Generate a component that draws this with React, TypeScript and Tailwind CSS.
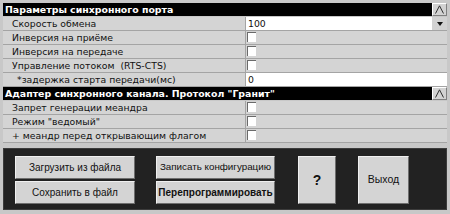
import React from 'react'

type Row = { label: string; kind: 'select' | 'check' | 'text'; value?: string; indent?: boolean }

const PORT_ROWS: Row[] = [
  { label: 'Скорость обмена', kind: 'select', value: '100' },
  { label: 'Инверсия на приёме', kind: 'check' },
  { label: 'Инверсия на передаче', kind: 'check' },
  { label: 'Управление потоком  (RTS-CTS)', kind: 'check' },
  { label: '*задержка старта передачи(мс)', kind: 'text', value: '0', indent: true },
]

const ADAPTER_ROWS: Row[] = [
  { label: 'Запрет генерации меандра', kind: 'check' },
  { label: 'Режим "ведомый"', kind: 'check' },
  { label: '+ меандр перед открывающим флагом', kind: 'check' },
]

function UpButton() {
  return (
    <div className="w-[15px] h-full bg-[#d2d2d2] border border-t-white border-l-white border-r-[#808080] border-b-[#808080] flex items-center justify-center">
      <svg width="9" height="9" viewBox="0 0 9 9">
        <polyline points="0.5,8.5 4.5,0.8 8.5,8.5" fill="none" stroke="#303030" strokeWidth="1" />
      </svg>
    </div>
  )
}

function Header({ title }: { title: string }) {
  return (
    <div className="h-[13px] flex">
      <div className="flex-1 bg-black text-white font-bold text-[9.4px] leading-[13px] pl-[2px] whitespace-pre">{title}</div>
      <UpButton />
    </div>
  )
}

function Checkbox() {
  return <div className="w-[9px] h-[10px] bg-white border-t border-l border-[#6a6a6a]" />
}

function PropRow({ row }: { row: Row }) {
  return (
    <div className="h-[14px] flex border-b border-[#a4a4a4] bg-[#d4d4d4]">
      <div
        className={`w-[243px] shrink-0 border-r border-[#a4a4a4] text-[9.3px] leading-[13px] text-[#111] whitespace-pre ${
          row.indent ? 'pl-[14px]' : 'pl-[9px]'
        }`}
      >
        {row.label}
      </div>
      {row.kind === 'check' && (
        <div className="flex-1 pl-[1px] pt-[1px]">
          <Checkbox />
        </div>
      )}
      {row.kind === 'text' && (
        <div className="flex-1 bg-white text-[9.3px] leading-[13px] pl-[2px] text-[#111]">{row.value}</div>
      )}
      {row.kind === 'select' && (
        <div className="flex-1 flex bg-white">
          <div className="flex-1 text-[9.3px] leading-[13px] pl-[2px] text-[#111]">{row.value}</div>
          <div className="w-[15px] bg-[#d2d2d2] flex items-center justify-center">
            <svg width="6" height="4" viewBox="0 0 6 4">
              <polygon points="0,0 6,0 3,4" fill="#111" />
            </svg>
          </div>
        </div>
      )}
    </div>
  )
}

function Btn({ children, className = '' }: { children: React.ReactNode; className?: string }) {
  return (
    <div
      className={`bg-[#d4d4d4] border border-t-[#f0f0f0] border-l-[#f0f0f0] border-r-[#6e6e6e] border-b-[#6e6e6e] flex items-center justify-center text-[#111] whitespace-nowrap ${className}`}
      style={{ fontFamily: '"Liberation Sans", Arial, sans-serif' }}
    >
      {children}
    </div>
  )
}

export default function App() {
  return (
    <div
      className="w-[450px] h-[214px] bg-[#c8c8c8] pt-[3px] px-[3px] flex flex-col overflow-hidden"
      style={{ fontFamily: '"DejaVu Sans", Verdana, sans-serif' }}
    >
      {/* Synchronous port */}
      <Header title="Параметры синхронного порта" />
      <div className="h-[1px]" />
      {PORT_ROWS.map((r) => (
        <PropRow key={r.label} row={r} />
      ))}

      {/* Adapter */}
      <Header title={'Адаптер синхронного канала. Протокол "Гранит"'} />
      <div className="h-[1px]" />
      {ADAPTER_ROWS.map((r) => (
        <PropRow key={r.label} row={r} />
      ))}

      {/* Bottom actions */}
      <div className="mt-[5px] h-[62px] bg-[#222] border border-[#3c3c3c] flex pl-[11px] pt-[7px] gap-[21px]">
        <div className="w-[120px] flex flex-col gap-[2px]">
          <Btn className="h-[23px] text-[10px]">Загрузить из файла</Btn>
          <Btn className="h-[23px] text-[10px]">Сохранить в файл</Btn>
        </div>
        <div className="w-[119px] flex flex-col gap-[2px]">
          <Btn className="h-[23px] text-[9.8px]">Записать конфигурацию</Btn>
          <Btn className="h-[23px] text-[10px] font-bold">Перепрограммировать</Btn>
        </div>
        <Btn className="w-[38px] h-[48px] ml-[2px] font-bold text-[14px]">?</Btn>
        <Btn className="w-[51px] h-[48px] ml-[1px] text-[10.5px]">Выход</Btn>
      </div>
    </div>
  )
}
